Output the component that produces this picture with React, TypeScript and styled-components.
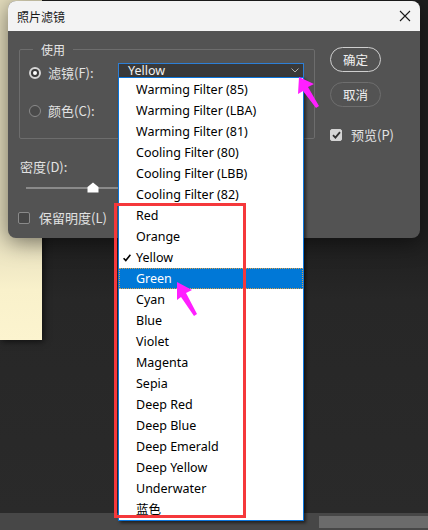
import React from "react";
import styled, { createGlobalStyle } from "styled-components";

const GlobalStyle = createGlobalStyle`
  html, body {
    margin: 0;
    padding: 0;
    background: #282828;
  }
  body {
    font-family: "Noto Sans", "Noto Sans CJK SC", sans-serif;
  }
  * {
    box-sizing: border-box;
  }
`;

const filters = [
  "Warming Filter (85)",
  "Warming Filter (LBA)",
  "Warming Filter (81)",
  "Cooling Filter (80)",
  "Cooling Filter (LBB)",
  "Cooling Filter (82)",
  "Red",
  "Orange",
  "Yellow",
  "Green",
  "Cyan",
  "Blue",
  "Violet",
  "Magenta",
  "Sepia",
  "Deep Red",
  "Deep Blue",
  "Deep Emerald",
  "Deep Yellow",
  "Underwater",
  "蓝色",
];

const selected = "Yellow";
const hovered = "Green";

const Screen = styled.div`
  position: relative;
  width: 428px;
  height: 530px;
  overflow: hidden;
  display: flex;
  flex-direction: column;
  background: #282828;
`;

const Workspace = styled.main`
  position: relative;
  flex: 1;
  background: linear-gradient(#1f1f1f 0, #1f1f1f 240px, #272727 300px, #2a2a2a 100%);
`;

const DocumentCanvas = styled.div`
  position: absolute;
  left: 0;
  top: 0;
  width: 42px;
  height: 340px;
  background: linear-gradient(#e4ddbd 0, #e4ddbd 230px, #f9f1cb 290px, #fcf4cf 100%);
  box-shadow: 2px 2px 6px rgba(0, 0, 0, 0.55);
`;

const StatusBar = styled.footer`
  height: 17px;
  flex: none;
  background: #474747;
  display: flex;
  justify-content: flex-end;
  align-items: center;
`;

const ScrollThumb = styled.div`
  width: 109px;
  height: 12px;
  background: #6b6b6b;
`;

const Dialog = styled.section`
  position: absolute;
  left: 8px;
  top: 1px;
  width: 412px;
  height: 237px;
  z-index: 2;
  background: #535353;
  border-radius: 8px;
  box-shadow: 0 4px 22px rgba(0, 0, 0, 0.5);
  display: flex;
  flex-direction: column;
`;

const TitleBar = styled.header`
  height: 30px;
  flex: none;
  background: #f3f3f3;
  border-radius: 8px 8px 0 0;
  display: flex;
  align-items: center;
  justify-content: space-between;
  padding: 0 9px 0 9px;
  font: 12px "Noto Sans CJK SC", sans-serif;
  color: #1a1a1a;
`;

const CloseButton = styled.span`
  display: flex;
  width: 12px;
  height: 12px;
`;

const Body = styled.div`
  display: flex;
  padding: 10px 0 0 11px;
  color: #e2e2e2;
  font: 13px "Noto Sans CJK SC", sans-serif;
`;

const LeftColumn = styled.div`
  width: 296px;
  display: flex;
  flex-direction: column;
`;

const GroupBox = styled.fieldset`
  margin: 0;
  padding: 4px 0 16px 0;
  border: 1px solid #6d6d6d;
  border-radius: 2px;
  display: flex;
  flex-direction: column;
  gap: 16px;
`;

const Legend = styled.legend`
  margin-left: 13px;
  padding: 0 8px;
  font-size: 12px;
  line-height: 17px;
  color: #e6e6e6;
`;

const OptionRow = styled.div`
  display: flex;
  align-items: center;
  height: 22px;
  padding-left: 9px;
`;

const Radio = styled.span<{ $checked?: boolean }>`
  width: 12px;
  height: 12px;
  border-radius: 50%;
  flex: none;
  display: flex;
  align-items: center;
  justify-content: center;
  background: ${(p) => (p.$checked ? "#3a3a3a" : "#4a4a4a")};
  border: ${(p) => (p.$checked ? "2px solid #d6d6d6" : "1px solid #8a8a8a")};

  &::after {
    content: "";
    display: ${(p) => (p.$checked ? "block" : "none")};
    width: 4px;
    height: 4px;
    border-radius: 50%;
    background: #ffffff;
  }
`;

const OptionLabel = styled.span`
  margin-left: 7px;
  width: 70px;
  line-height: 18px;
  white-space: nowrap;
`;

const SelectBox = styled.div`
  position: relative;
  width: 186px;
  height: 14px;
  align-self: flex-start;
  margin-top: 1px;
  background: #393939;
  border: 1px solid #2d7fd6;
  border-bottom: none;
  display: flex;
  align-items: center;
  justify-content: space-between;
  padding: 0 4px 0 9px;
  color: #f2f2f2;
  font: 12.5px "Noto Sans", sans-serif;
  line-height: 13px;
`;

const DropList = styled.ul`
  position: absolute;
  left: -1px;
  top: 100%;
  width: 186px;
  margin: 0;
  padding: 1px 0 0;
  list-style: none;
  background: #ffffff;
  border: 1px solid #0a74da;
  box-shadow: 2px 2px 3px rgba(0, 0, 0, 0.55);
  z-index: 10;
`;

const DropItem = styled.li<{ $active?: boolean }>`
  position: relative;
  height: 21px;
  padding-left: 17px;
  font: 12.5px "Noto Sans", "Noto Sans CJK SC", sans-serif;
  line-height: 21px;
  color: ${(p) => (p.$active ? "#ffffff" : "#000000")};
  background: ${(p) => (p.$active ? "#0078d7" : "transparent")};
  outline: ${(p) => (p.$active ? "1px dotted #d9a04c" : "none")};
  outline-offset: -1px;
`;

const CheckMark = styled.svg`
  position: absolute;
  left: 4px;
  top: 7px;
`;

const FieldLabel = styled.div`
  margin-top: 19px;
  padding-left: 1px;
  line-height: 18px;
`;

const Slider = styled.div`
  position: relative;
  margin: 6px 20px 0 7px;
  height: 12px;
  display: flex;
  align-items: center;
`;

const SliderTrack = styled.div`
  width: 100%;
  height: 2px;
  background: #8a8a8a;
`;

const SliderThumb = styled.svg`
  position: absolute;
  left: 61px;
  top: 0;
`;

const CheckRow = styled.label`
  display: flex;
  align-items: center;
  gap: 9px;
  margin: 15px 0 0 -1px;
  line-height: 18px;
`;

const CheckBox = styled.span<{ $checked?: boolean }>`
  width: 12px;
  height: 12px;
  flex: none;
  border-radius: 2px;
  display: flex;
  align-items: center;
  justify-content: center;
  background: ${(p) => (p.$checked ? "#d4d4d4" : "#474747")};
  border: 1px solid ${(p) => (p.$checked ? "#d4d4d4" : "#8a8a8a")};
`;

const SideColumn = styled.div`
  display: flex;
  flex-direction: column;
  align-items: flex-start;
  margin-left: 15px;
  padding-top: 6px;
`;

const PillButton = styled.button<{ $primary?: boolean }>`
  width: 51px;
  height: 25px;
  margin: 0 0 10px;
  padding: 0;
  border-radius: 13px;
  border: 1.5px solid ${(p) => (p.$primary ? "#cfcfcf" : "#6e6e6e")};
  background: transparent;
  color: #f0f0f0;
  font: 12.5px "Noto Sans CJK SC", sans-serif;
`;

const PreviewRow = styled(CheckRow)`
  margin: 9px 0 0;
`;

const Annotations = styled.svg`
  position: absolute;
  left: 0;
  top: 0;
  z-index: 30;
  pointer-events: none;
`;

const Tick = ({ color }: { color: string }) => (
  <svg width="9" height="8" viewBox="0 0 9 8">
    <path d="M1 4.2 L3.4 6.6 L8 1.2" fill="none" stroke={color} strokeWidth="1.8" />
  </svg>
);

export default function App() {
  return (
    <>
      <GlobalStyle />
      <Screen>
        <Workspace>
          <DocumentCanvas />
          <Dialog>
            <TitleBar>
              <span>照片滤镜</span>
              <CloseButton>
                <svg width="12" height="12" viewBox="0 0 12 12">
                  <path d="M1 1 L11 11 M11 1 L1 11" stroke="#1a1a1a" strokeWidth="1.1" />
                </svg>
              </CloseButton>
            </TitleBar>
            <Body>
              <LeftColumn>
                <GroupBox>
                  <Legend>使用</Legend>
                  <OptionRow>
                    <Radio $checked />
                    <OptionLabel>滤镜(F):</OptionLabel>
                    <SelectBox>
                      <span>{selected}</span>
                      <svg width="8" height="5" viewBox="0 0 8 5">
                        <path d="M0.5 0.5 L4 4 L7.5 0.5" fill="none" stroke="#b0b0b0" strokeWidth="1" />
                      </svg>
                      <DropList>
                        {filters.map((name) => (
                          <DropItem key={name} $active={name === hovered}>
                            {name === selected && (
                              <CheckMark width="8" height="8" viewBox="0 0 8 8">
                                <path d="M0.6 4.2 L2.8 6.6 L7.4 0.8" fill="none" stroke="#000" strokeWidth="1.6" />
                              </CheckMark>
                            )}
                            {name}
                          </DropItem>
                        ))}
                      </DropList>
                    </SelectBox>
                  </OptionRow>
                  <OptionRow>
                    <Radio />
                    <OptionLabel>颜色(C):</OptionLabel>
                  </OptionRow>
                </GroupBox>
                <FieldLabel>密度(D):</FieldLabel>
                <Slider>
                  <SliderTrack />
                  <SliderThumb width="12" height="11" viewBox="0 0 12 11">
                    <path d="M6 0.5 L11.5 5 L11.5 10.5 L0.5 10.5 L0.5 5 Z" fill="#ffffff" />
                  </SliderThumb>
                </Slider>
                <CheckRow>
                  <CheckBox />
                  <span>保留明度(L)</span>
                </CheckRow>
              </LeftColumn>
              <SideColumn>
                <PillButton $primary>确定</PillButton>
                <PillButton>取消</PillButton>
                <PreviewRow>
                  <CheckBox $checked>
                    <Tick color="#303030" />
                  </CheckBox>
                  <span>预览(P)</span>
                </PreviewRow>
              </SideColumn>
            </Body>
          </Dialog>
        </Workspace>
        <StatusBar>
          <ScrollThumb />
        </StatusBar>
        <Annotations width="428" height="530" viewBox="0 0 428 530">
          <rect x="115.5" y="204.5" width="129" height="312" fill="none" stroke="#f5383b" strokeWidth="3" />
          <polygon points="299,77 314,84 308,87 319,106 316,108 303,91 298,94" fill="#ff1fff" />
          <polygon points="177,282 192,290 186,293 197,314 194,316 181,297 177,300" fill="#ff1fff" />
        </Annotations>
      </Screen>
    </>
  );
}
